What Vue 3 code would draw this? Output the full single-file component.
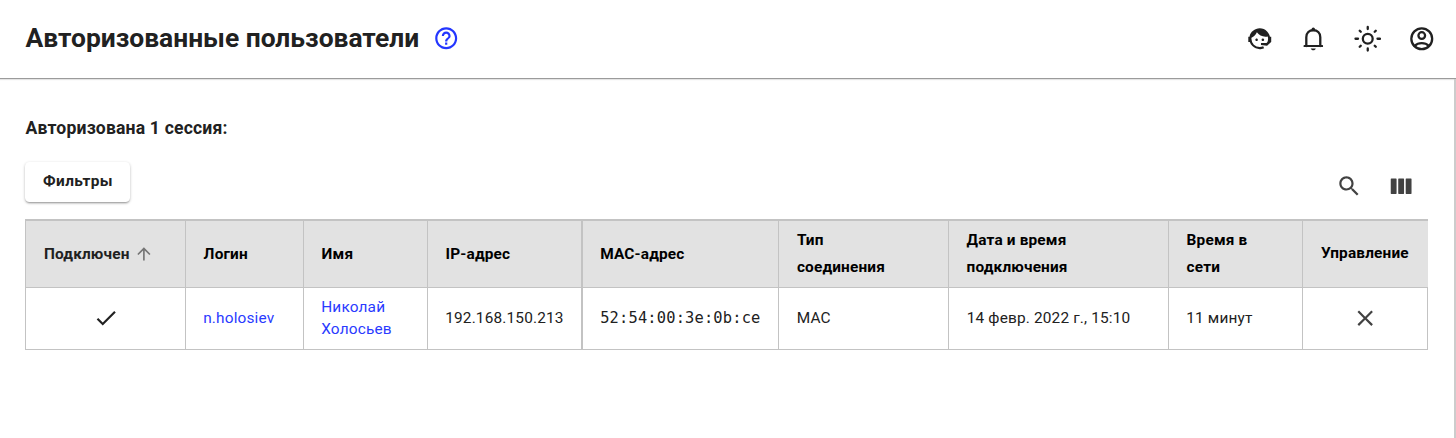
<script setup>
const sortArrow = 'M4 12l1.41 1.41L11 7.83V20h2V7.83l5.58 5.59L20 12l-8-8-8 8z'
const headers = [
  { text: 'Подключен', sorted: true },
  { text: 'Логин' },
  { text: 'Имя' },
  { text: 'IP-адрес' },
  { text: 'MAC-адрес', thick: true },
  { text: 'Тип соединения', narrow: true },
  { text: 'Дата и время подключения' },
  { text: 'Время в сети' },
  { text: 'Управление', raised: true },
]
const actions = [
  { label: 'Поддержка', d: 'M18.72,14.76C19.07,13.91 19.26,13 19.26,12C19.26,11.28 19.15,10.59 18.96,9.95C18.31,10.1 17.63,10.18 16.92,10.18C13.86,10.18 11.15,8.67 9.5,6.34C8.61,8.5 6.91,10.26 4.77,11.22C4.73,11.47 4.73,11.74 4.73,12A7.27,7.27 0 0,0 12,19.27C13.05,19.27 14.06,19.04 14.97,18.63C15.54,19.72 15.8,20.26 15.78,20.26C14.14,20.81 12.87,21.08 12,21.08C9.58,21.08 7.27,20.13 5.57,18.42C4.53,17.38 3.76,16.11 3.33,14.73H2V10.18H3.09C3.93,6.04 7.6,2.92 12,2.92C14.4,2.92 16.71,3.87 18.42,5.58C19.69,6.84 20.54,8.45 20.89,10.18H22V14.67H22V14.69L22,14.73H21.94L18.38,18L13.08,17.4V15.73H17.91L18.72,14.76M9.27,11.77C9.57,11.77 9.86,11.89 10.07,12.11C10.28,12.32 10.4,12.61 10.4,12.91C10.4,13.21 10.28,13.5 10.07,13.71C9.86,13.92 9.57,14.04 9.27,14.04C8.64,14.04 8.13,13.54 8.13,12.91C8.13,12.28 8.64,11.77 9.27,11.77M14.72,11.77C15.35,11.77 15.85,12.28 15.85,12.91C15.85,13.54 15.35,14.04 14.72,14.04C14.09,14.04 13.58,13.54 13.58,12.91A1.14,1.14 0 0,1 14.72,11.77Z' },
  { label: 'Уведомления', bell: true },
  { label: 'Тема', sun: true },
  { label: 'Профиль', user: true },
]
</script>

<template>
  <div class="page">
    <header class="bar">
      <h1>Авторизованные пользователи</h1>
      <svg class="help" viewBox="0 0 24 24"><path d="M11 18h2v-2h-2v2zm1-16C6.480 2 2 6.480 2 12s4.480 10 10 10 10-4.480 10-10S17.520 2 12 2zm0 18c-4.410 0-8-3.590-8-8s3.590-8 8-8 8 3.590 8 8-3.590 8-8 8zm0-14c-2.210 0-4 1.790-4 4h2c0-1.100.9-2 2-2s2 .9 2 2c0 2-3 1.750-3 5h2c0-2.250 3-2.500 3-5 0-2.210-1.790-4-4-4z" /></svg>
      <nav class="actions">
        <svg v-for="a in actions" :key="a.label" viewBox="0 0 24 24" :aria-label="a.label">
          <path v-if="a.d" :d="a.d" />
          <g v-else-if="a.bell" transform="translate(-.4 0)">
            <path class="stroke" d="M5.900 18.400V10.700C5.900 6.900 8.500 4.600 12 4.600s6.100 2.300 6.100 6.100v7.700" />
            <circle cx="12" cy="3.600" r="1.500" />
            <rect x="3.500" y="17.400" width="17" height="1.900" rx=".6" />
            <path d="M9.800 20.400h4.400c-.3 1-1.100 1.600-2.200 1.600s-1.900-.6-2.200-1.600z" />
          </g>
          <g v-else-if="a.sun" class="stroke">
            <circle cx="12" cy="12" r="4.300" />
            <path d="M12 1.700v1.800M12 20.500v1.800M1.300 12h2.200M20.500 12h2.200M5 5l.9.9M18.100 18.100l.9.9M5 19l.9-.9M18.100 5.900l.9-.9" />
          </g>
          <g v-else class="stroke">
            <circle cx="12" cy="12" r="9.100" />
            <circle cx="12" cy="9.200" r="2.900" />
            <path d="M5.800 18.200c1.600-1.500 3.800-2.300 6.200-2.300s4.600.8 6.200 2.300" />
          </g>
        </svg>
      </nav>
    </header>
    <main>
      <h2>Авторизована 1 сессия:</h2>
      <div class="tools">
        <button>Фильтры</button>
        <div class="table-actions">
          <svg viewBox="0 0 24 24"><path d="M15.500 14h-.79l-.28-.27C15.410 12.590 16 11.110 16 9.500 16 5.910 13.090 3 9.500 3S3 5.910 3 9.500 5.910 16 9.500 16c1.610 0 3.090-.59 4.230-1.570l.27.28v.79l5 4.990L20.490 19l-4.990-5zm-6 0C7.010 14 5 11.990 5 9.500S7.010 5 9.500 5 14 7.010 14 9.500 11.990 14 9.500 14z" /></svg>
          <svg viewBox="0 0 24 24"><rect x="2.500" y="5" width="5.300" height="14" rx=".5" /><rect x="9.300" y="5" width="5.300" height="14" rx=".5" /><rect x="16.100" y="5" width="5.300" height="14" rx=".5" /></svg>
        </div>
      </div>
      <div class="table">
        <div v-for="h in headers" :key="h.text" class="cell head" :class="{ thick: h.thick, sorted: h.sorted, raised: h.raised, narrow: h.narrow }">
          <span>{{ h.text }}</span>
          <svg v-if="h.sorted" class="arrow" viewBox="0 0 24 24"><path :d="sortArrow" /></svg>
        </div>
        <div class="cell body center"><svg class="check" viewBox="0 0 24 24"><path d="M9 16.170 4.830 12l-1.420 1.410L9 19 21 7l-1.410-1.410z" /></svg></div>
        <div class="cell body"><a>n.holosiev</a></div>
        <div class="cell body"><a>Николай Холосьев</a></div>
        <div class="cell body">192.168.150.213</div>
        <div class="cell body thick mono">52:54:00:3e:0b:ce</div>
        <div class="cell body wide">MAC</div>
        <div class="cell body wide">14 февр. 2022 г., 15:10</div>
        <div class="cell body">11 минут</div>
        <div class="cell center"><svg class="close" viewBox="0 0 24 24"><path d="M19 6.410 17.590 5 12 10.590 6.410 5 5 6.410 10.590 12 5 17.590 6.410 19 12 13.410 17.590 19 19 17.590 13.410 12z" /></svg></div>
      </div>
    </main>
  </div>
</template>

<style>
body { margin: 0; background: #fff; overflow: hidden; }
</style>

<style scoped>
.page { height: 438px; display: flex; flex-direction: column; font-family: Roboto, sans-serif; color: #212121; }
svg { display: block; fill: currentColor; flex: none; }
.bar { box-sizing: border-box; height: 79px; flex: none; display: flex; align-items: center; padding: 0 20.700px 1px 25.500px; border-bottom: 1px solid #9b9b9b; box-shadow: 0 1px 1px #e4e4e4; }
h1 { margin: 0; padding-bottom: 1px; font-size: 26.400px; font-weight: 700; line-height: 36px; white-space: nowrap; }
.help { width: 26.400px; height: 26.400px; margin-left: 13.500px; color: #2336ff; }
.actions { display: flex; gap: 26.500px; margin-left: auto; }
.actions svg { width: 27.500px; height: 27.500px; }
.stroke { fill: none; stroke: currentColor; stroke-width: 2; stroke-linecap: round; }
main { box-sizing: border-box; flex: 1; padding: 36px 26px 0 25px; border-right: 2px solid #ccc; }
h2 { margin: 0 0 0 .5px; font-size: 17.600px; font-weight: 700; line-height: 26px; letter-spacing: .165px; }
.tools { display: flex; justify-content: space-between; align-items: flex-start; height: 58px; margin-top: 20px; }
button { width: 105px; height: 40px; margin-top: 1px; padding: 0 0 2px; border: 0; border-radius: 4.400px; background: #fff; color: #212121; font: 700 15.400px Roboto, sans-serif; letter-spacing: .44px; text-indent: 1px; box-shadow: 0 2px 2px -1px rgba(0, 0, 0, .25), 0 1px 3px rgba(0, 0, 0, .25); }
.table-actions { display: flex; gap: 26px; margin: 12px 13.600px 0 0; color: #424242; }
.table-actions svg { width: 26.400px; height: 26.400px; }
.table { display: grid; grid-template-columns: 160px 118px 124px 154px 197px 170px 220px 134px 126px; grid-template-rows: 67px 62px; width: 1403px; box-sizing: border-box; border-top: 2px solid #c3c3c3; border-right: 1px solid #c3c3c3; margin-right: -1px; }
.cell { box-sizing: border-box; display: flex; align-items: center; border-left: 1px solid #c3c3c3; border-bottom: 1px solid #c3c3c3; padding: 0 17.600px; font-size: 15.400px; line-height: 22px; letter-spacing: .165px; }
.body { padding: 0 17.200px 2px; }
.wide { padding-left: 17.700px; }
.head { background: #e2e2e2; color: #000; font-weight: 700; line-height: 27px; }
.sorted { color: #212121; padding-left: 18px; }
.narrow { padding-left: 17.900px; padding-right: 40px; }
.thick { border-left-width: 2px; padding-left: 17.200px; }
.arrow { width: 19.800px; height: 19.800px; margin-left: 4.600px; color: #757575; }
.raised { padding-left: 18px; padding-right: 0; }
.raised span { padding-bottom: 2px; }
.center { justify-content: center; }
.check { width: 26px; height: 26px; }
.close { width: 26.400px; height: 26.400px; color: #424242; }
.mono { font-family: "DejaVu Sans Mono", monospace; }
a { color: #2a3aff; }
</style>
